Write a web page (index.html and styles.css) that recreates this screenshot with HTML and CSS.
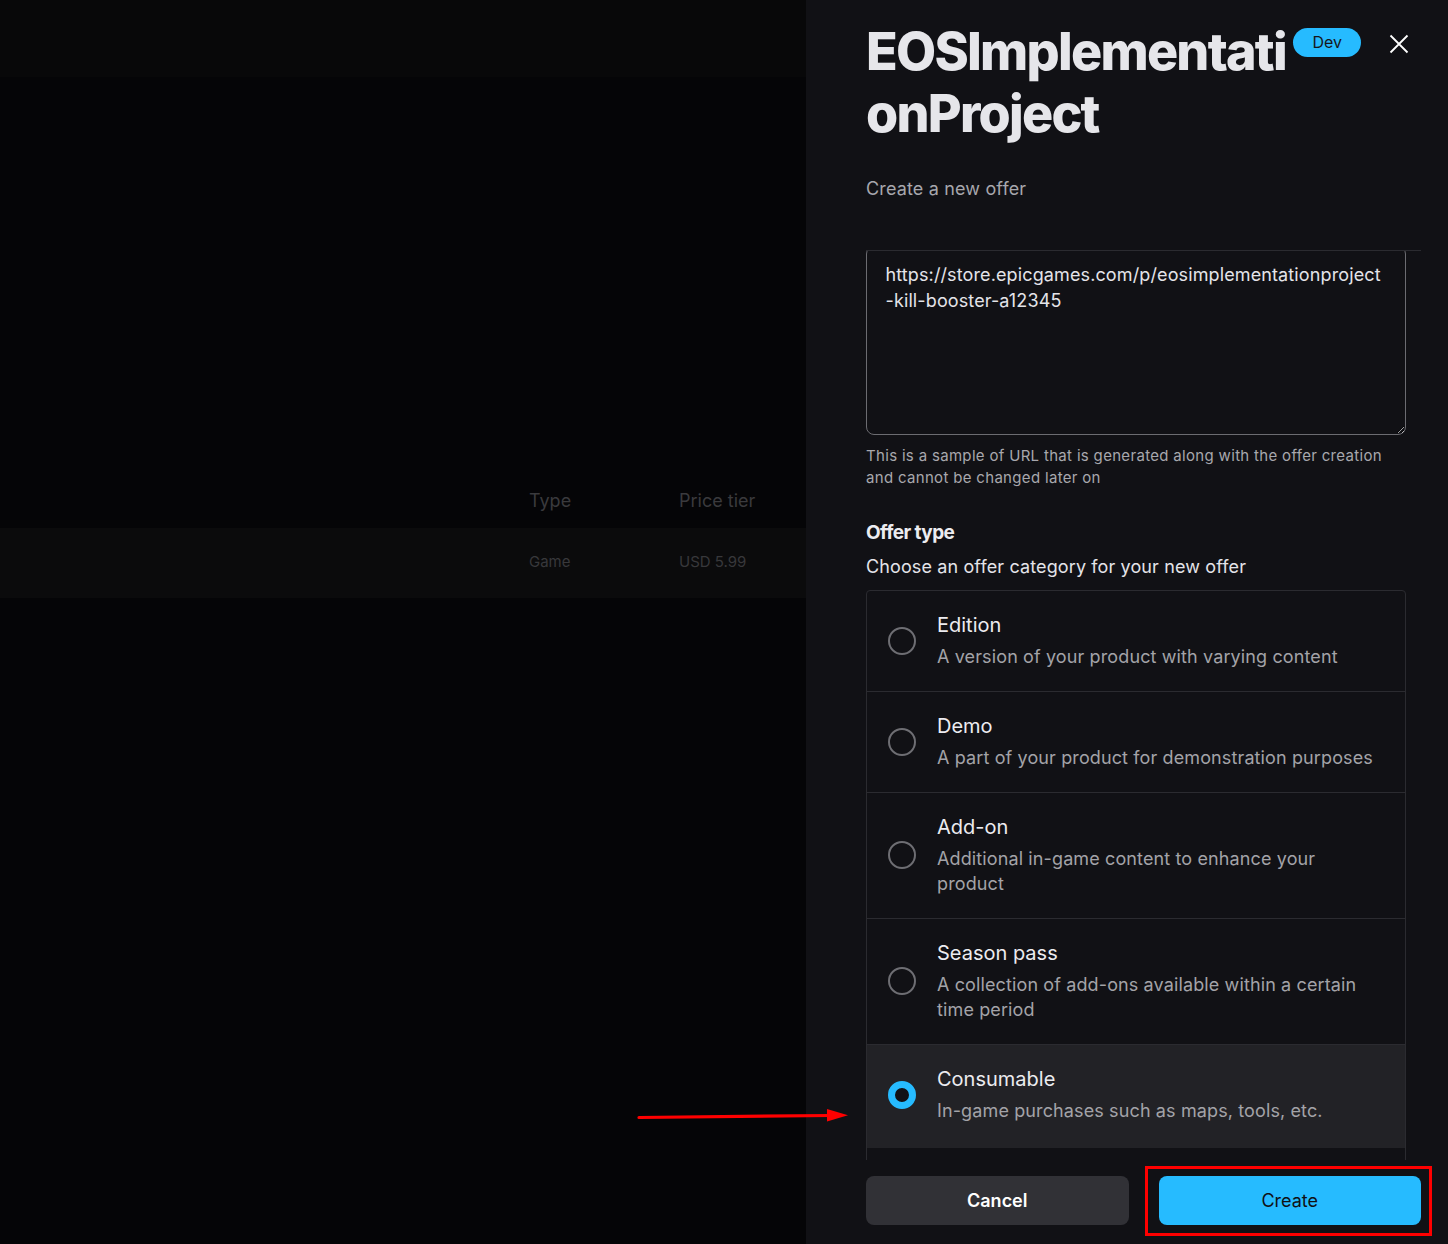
FILE: index.html
```html
<!DOCTYPE html>
<html lang="en">
<head>
<meta charset="utf-8">
<title>Create a new offer</title>
<link rel="stylesheet" href="styles.css">
</head>
<body>
<div class="app">
  <main class="page">
    <div class="page-top"></div>
    <div class="table">
      <div class="table-head">
        <span class="col-type">Type</span>
        <span class="col-price">Price tier</span>
      </div>
      <div class="table-row">
        <span class="col-type">Game</span>
        <span class="col-price">USD 5.99</span>
      </div>
    </div>
  </main>

  <aside class="drawer">
    <header class="drawer-head">
      <h1 class="title">EOSImplementationProject</h1>
      <span class="badge">Dev</span>
      <button class="close" aria-label="Close">
        <svg width="20" height="20" viewBox="0 0 20 20"><path d="M1.5 1.5L18.5 18.5M18.5 1.5L1.5 18.5" stroke="#ffffff" stroke-width="1.8" fill="none"/></svg>
      </button>
    </header>
    <p class="subtitle">Create a new offer</p>

    <div class="scroll">
      <textarea class="url" readonly>https://store.epicgames.com/p/eosimplementationproject-kill-booster-a12345</textarea>
      <p class="hint">This is a sample of URL that is generated along with the offer creation and cannot be changed later on</p>

      <h2 class="section-title">Offer type</h2>
      <p class="section-sub">Choose an offer category for your new offer</p>

      <div class="options">
        <div class="option">
          <span class="radio"></span>
          <span class="option-text">
            <span class="option-title">Edition</span>
            <span class="option-desc">A version of your product with varying content</span>
          </span>
        </div>
        <div class="option">
          <span class="radio"></span>
          <span class="option-text">
            <span class="option-title">Demo</span>
            <span class="option-desc">A part of your product for demonstration purposes</span>
          </span>
        </div>
        <div class="option">
          <span class="radio"></span>
          <span class="option-text">
            <span class="option-title">Add-on</span>
            <span class="option-desc">Additional in-game content to enhance your product</span>
          </span>
        </div>
        <div class="option">
          <span class="radio"></span>
          <span class="option-text">
            <span class="option-title">Season pass</span>
            <span class="option-desc">A collection of add-ons available within a certain time period</span>
          </span>
        </div>
        <div class="option option-selected">
          <span class="radio radio-on"></span>
          <span class="option-text">
            <span class="option-title">Consumable</span>
            <span class="option-desc">In-game purchases such as maps, tools, etc.</span>
          </span>
        </div>
      </div>
    </div>

    <footer class="drawer-foot">
      <button class="btn btn-cancel">Cancel</button>
      <button class="btn btn-create">Create</button>
    </footer>
  </aside>
</div>

<svg class="annot-arrow" width="230" height="30" viewBox="0 0 230 30">
  <path d="M9 17.5L200 15.5" stroke="#ff0000" stroke-width="3.2" stroke-linecap="round" fill="none"/>
  <polygon points="197,9 218,15.3 197,21.5" fill="#ff0000"/>
</svg>
<div class="annot-box"></div>
</body>
</html>
```

FILE: styles.css
```css
* {
  box-sizing: border-box;
}

html, body {
  margin: 0;
  padding: 0;
}

body {
  background: #050507;
  font-family: Inter, "Noto Sans", "Liberation Sans", sans-serif;
  color: #e6e6ea;
  overflow: hidden;
}

.app {
  display: flex;
  height: 1244px;
}

/* ---------- dimmed page behind the drawer ---------- */
.page {
  flex: 1;
  min-width: 0;
  background: #050507;
}

.page-top {
  height: 77px;
  background: #080809;
}

.table {
  margin-top: 400px;
}

.table-head,
.table-row {
  display: flex;
  align-items: center;
  padding-left: 529px;
}

.table-head {
  height: 51px;
  padding-bottom: 5px;
  font-size: 18px;
  color: #3a3a3d;
}

.table-row {
  height: 70px;
  padding-bottom: 4px;
  background: #0b0b0c;
  font-size: 15px;
  color: #38383b;
}

.col-type {
  width: 150px;
}

/* ---------- drawer ---------- */
.drawer {
  width: 642px;
  flex: none;
  height: 1244px;
  background: #111115;
  padding: 0 27px 0 60px;
  display: flex;
  flex-direction: column;
}

.drawer-head {
  display: flex;
  align-items: flex-start;
  padding-top: 21px;
}

.title {
  flex: 1;
  min-width: 0;
  margin: 0;
  font-size: 52px;
  line-height: 62px;
  font-weight: 800;
  letter-spacing: -1.75px;
  color: #e6e6ea;
  word-break: break-all;
}

.badge {
  flex: none;
  margin-top: 7px;
  height: 29px;
  padding: 0 19px;
  border-radius: 15px;
  background: #26bbff;
  color: #16161a;
  font-size: 16px;
  line-height: 29px;
}

.close {
  flex: none;
  width: 36px;
  height: 36px;
  margin: 5px 4px 0 20px;
  padding: 0;
  border: none;
  background: transparent;
  display: flex;
  align-items: center;
  justify-content: center;
}

.subtitle {
  margin: 31px 0 0;
  font-size: 18px;
  line-height: 26px;
  letter-spacing: 0.15px;
  color: #a7a7ad;
}

.scroll {
  margin-top: 48px;
  flex: 1;
  min-height: 0;
  overflow: hidden;
  border-top: 1px solid #2b2b30;
  padding-right: 15px;
}

.url {
  display: block;
  width: 100%;
  height: 189px;
  margin: -5px 0 0;
  padding: 15px 20px 8px 18.5px;
  border: 1.5px solid #6c6c71;
  border-radius: 8px;
  background: transparent;
  color: #e4e4e9;
  font-family: Inter, "Noto Sans", sans-serif;
  font-size: 18px;
  line-height: 26px;
  letter-spacing: 0.12px;
  word-break: break-all;
  resize: vertical;
  overflow: hidden;
  outline: none;
  color-scheme: dark;
}

.hint {
  margin: 10px 0 0;
  font-size: 15px;
  line-height: 22px;
  letter-spacing: 0.32px;
  color: #a8a8ad;
}

.section-title {
  margin: 31px 0 0;
  font-size: 19px;
  line-height: 26px;
  font-weight: 700;
  letter-spacing: -0.6px;
  color: #ececf0;
}

.section-sub {
  margin: 8px 0 0;
  font-size: 18px;
  line-height: 26px;
  letter-spacing: 0.12px;
  color: #e4e4e9;
}

.options {
  margin-top: 10px;
  border: 1px solid #2b2b30;
  border-radius: 4px;
  padding-bottom: 60px;
}

.option {
  display: flex;
  align-items: center;
  gap: 21px;
  padding: 21px 28px 22px 21px;
  border-bottom: 1px solid #2b2b30;
}

.option-selected {
  background: #222226;
  border-bottom-color: #222226;
  padding-bottom: 24px;
}

.radio {
  flex: none;
  width: 28px;
  height: 28px;
  border: 2px solid #6e6e73;
  border-radius: 50%;
}

.radio-on {
  border: 7.5px solid #26bbff;
  background: #111115;
}

.option-text {
  display: flex;
  flex-direction: column;
}

.option-title {
  font-size: 20px;
  line-height: 26px;
  color: #ececf0;
}

.option-desc {
  margin-top: 6px;
  font-size: 18px;
  line-height: 25px;
  letter-spacing: 0.12px;
  color: #a3a3a8;
}

.drawer-foot {
  display: flex;
  gap: 30px;
  padding: 16px 0 19px;
}

.btn {
  flex: 1;
  height: 49px;
  border: none;
  border-radius: 8px;
  font-family: Inter, "Noto Sans", sans-serif;
  font-size: 18px;
}

.btn-cancel {
  background: #313136;
  color: #ffffff;
  font-weight: 600;
}

.btn-create {
  background: #26bbff;
  color: #101014;
  font-weight: 400;
}

/* ---------- annotations drawn over the screenshot ---------- */
.annot-arrow {
  position: absolute;
  left: 630px;
  top: 1100px;
}

.annot-box {
  position: absolute;
  left: 1145px;
  top: 1166px;
  width: 287px;
  height: 70px;
  border: 3px solid #ff0000;
}
```
